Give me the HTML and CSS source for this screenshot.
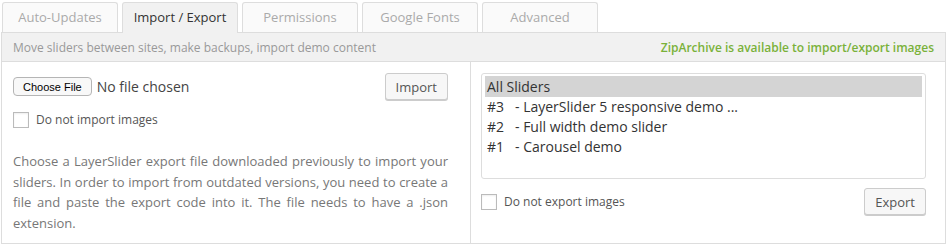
FILE: index.html
```html
<!DOCTYPE html>
<html lang="en">
<head>
  <meta charset="UTF-8">
  <title>LayerSlider Settings</title>
  <link rel="stylesheet" href="styles.css">
</head>
<body>

  <div class="settings">
    <div class="tabs">
      <div class="tab">Auto-Updates</div>
      <div class="tab active">Import / Export</div>
      <div class="tab">Permissions</div>
      <div class="tab">Google Fonts</div>
      <div class="tab">Advanced</div>
    </div>

    <div class="bar">
      <span>Move sliders between sites, make backups, import demo content</span>
      <span class="ok">ZipArchive is available to import/export images</span>
    </div>

    <div class="panels">
      <div class="panel">
        <div class="row">
          <div class="file">
            <button class="file-button">Choose File</button>
            <span class="file-name">No file chosen</span>
          </div>
          <button class="button">Import</button>
        </div>
        <label class="check">
          <span class="box"></span>
          Do not import images
        </label>
        <p class="desc">Choose a LayerSlider export file downloaded previously to import your sliders. In order to import from outdated versions, you need to create a file and paste the export code into it. The file needs to have a .json extension.</p>
      </div>

      <div class="panel right">
        <div class="list">
          <div class="item selected">All Sliders</div>
          <div class="item"><span class="num">#3</span>- LayerSlider 5 responsive demo ...</div>
          <div class="item"><span class="num">#2</span>- Full width demo slider</div>
          <div class="item"><span class="num">#1</span>- Carousel demo</div>
        </div>
        <div class="row bottom">
          <label class="check">
            <span class="box"></span>
            Do not export images
          </label>
          <button class="button">Export</button>
        </div>
      </div>
    </div>
  </div>

</body>
</html>
```

FILE: styles.css
```css
body {
  margin: 0;
  background: #fff;
  font-family: "Open Sans", sans-serif;
}

.settings {
  width: 945px;
  margin-left: 1px;
}

.tabs {
  display: flex;
  gap: 4px;
  padding: 2px 0 0 1px;
}

.tab {
  width: 114px;
  height: 29px;
  line-height: 28px;
  text-align: center;
  font-size: 13px;
  color: #aaa;
  background: #fafafa;
  border: 1px solid #ddd;
  border-bottom: none;
  border-radius: 3px 3px 0 0;
}

.tab.active {
  color: #333;
  background: #f1f1f1;
  position: relative;
  margin-bottom: -1px;
  height: 30px;
}

.bar {
  display: flex;
  justify-content: space-between;
  align-items: center;
  height: 28px;
  padding: 0 11px;
  font-size: 12px;
  color: #999;
  background: #f1f1f1;
  border: 1px solid #ddd;
}

.bar .ok {
  color: #7ab13a;
  font-weight: 600;
}

.panels {
  display: grid;
  grid-template-columns: 468px 1fr;
  height: 181px;
  border: 1px solid #ddd;
  border-top: none;
}

.panel {
  padding: 11px 22px 0 11px;
}

.panel.right {
  border-left: 1px solid #ddd;
  padding: 11px 19px 0 10px;
}

.row {
  display: flex;
  justify-content: space-between;
  align-items: center;
}

.file {
  display: flex;
  align-items: center;
  gap: 5px;
}

.file-button {
  font-family: "Liberation Sans", Arial, sans-serif;
  font-size: 11px;
  color: #000;
  background: #f8f8f8;
  border: 1px solid #b5b5b5;
  border-radius: 4px;
  padding: 2px 9px;
  height: 19px;
}

.file-name {
  font-size: 14px;
  color: #444;
}

.button {
  font-family: "Open Sans", sans-serif;
  font-size: 13px;
  color: #555;
  background: #f7f7f7;
  border: 1px solid #ccc;
  border-radius: 3px;
  box-shadow: 0 1px 0 #ccc;
  height: 27px;
  padding: 0 10px;
}

.check {
  display: flex;
  align-items: center;
  gap: 7px;
  font-size: 12px;
  color: #555;
  margin-top: 11px;
}

.box {
  width: 14px;
  height: 14px;
  border: 1px solid #bbb;
  background: #fff;
  box-shadow: inset 0 1px 2px rgba(0, 0, 0, 0.07);
}

.desc {
  margin: 23px 0 0;
  font-size: 13px;
  line-height: 20.7px;
  color: #777;
  text-align: justify;
}

.list {
  height: 100px;
  border: 1px solid #ddd;
  border-radius: 3px;
  padding: 2px 3px;
  font-size: 14px;
  color: #333;
}

.item {
  height: 20px;
  line-height: 20px;
  padding-left: 2px;
  white-space: nowrap;
}

.item.selected {
  background: #d4d4d4;
  height: 21px;
  line-height: 21px;
}

.num {
  display: inline-block;
  width: 28px;
}

.bottom {
  margin-top: 9px;
}

.bottom .check {
  margin-top: 0;
}
```
